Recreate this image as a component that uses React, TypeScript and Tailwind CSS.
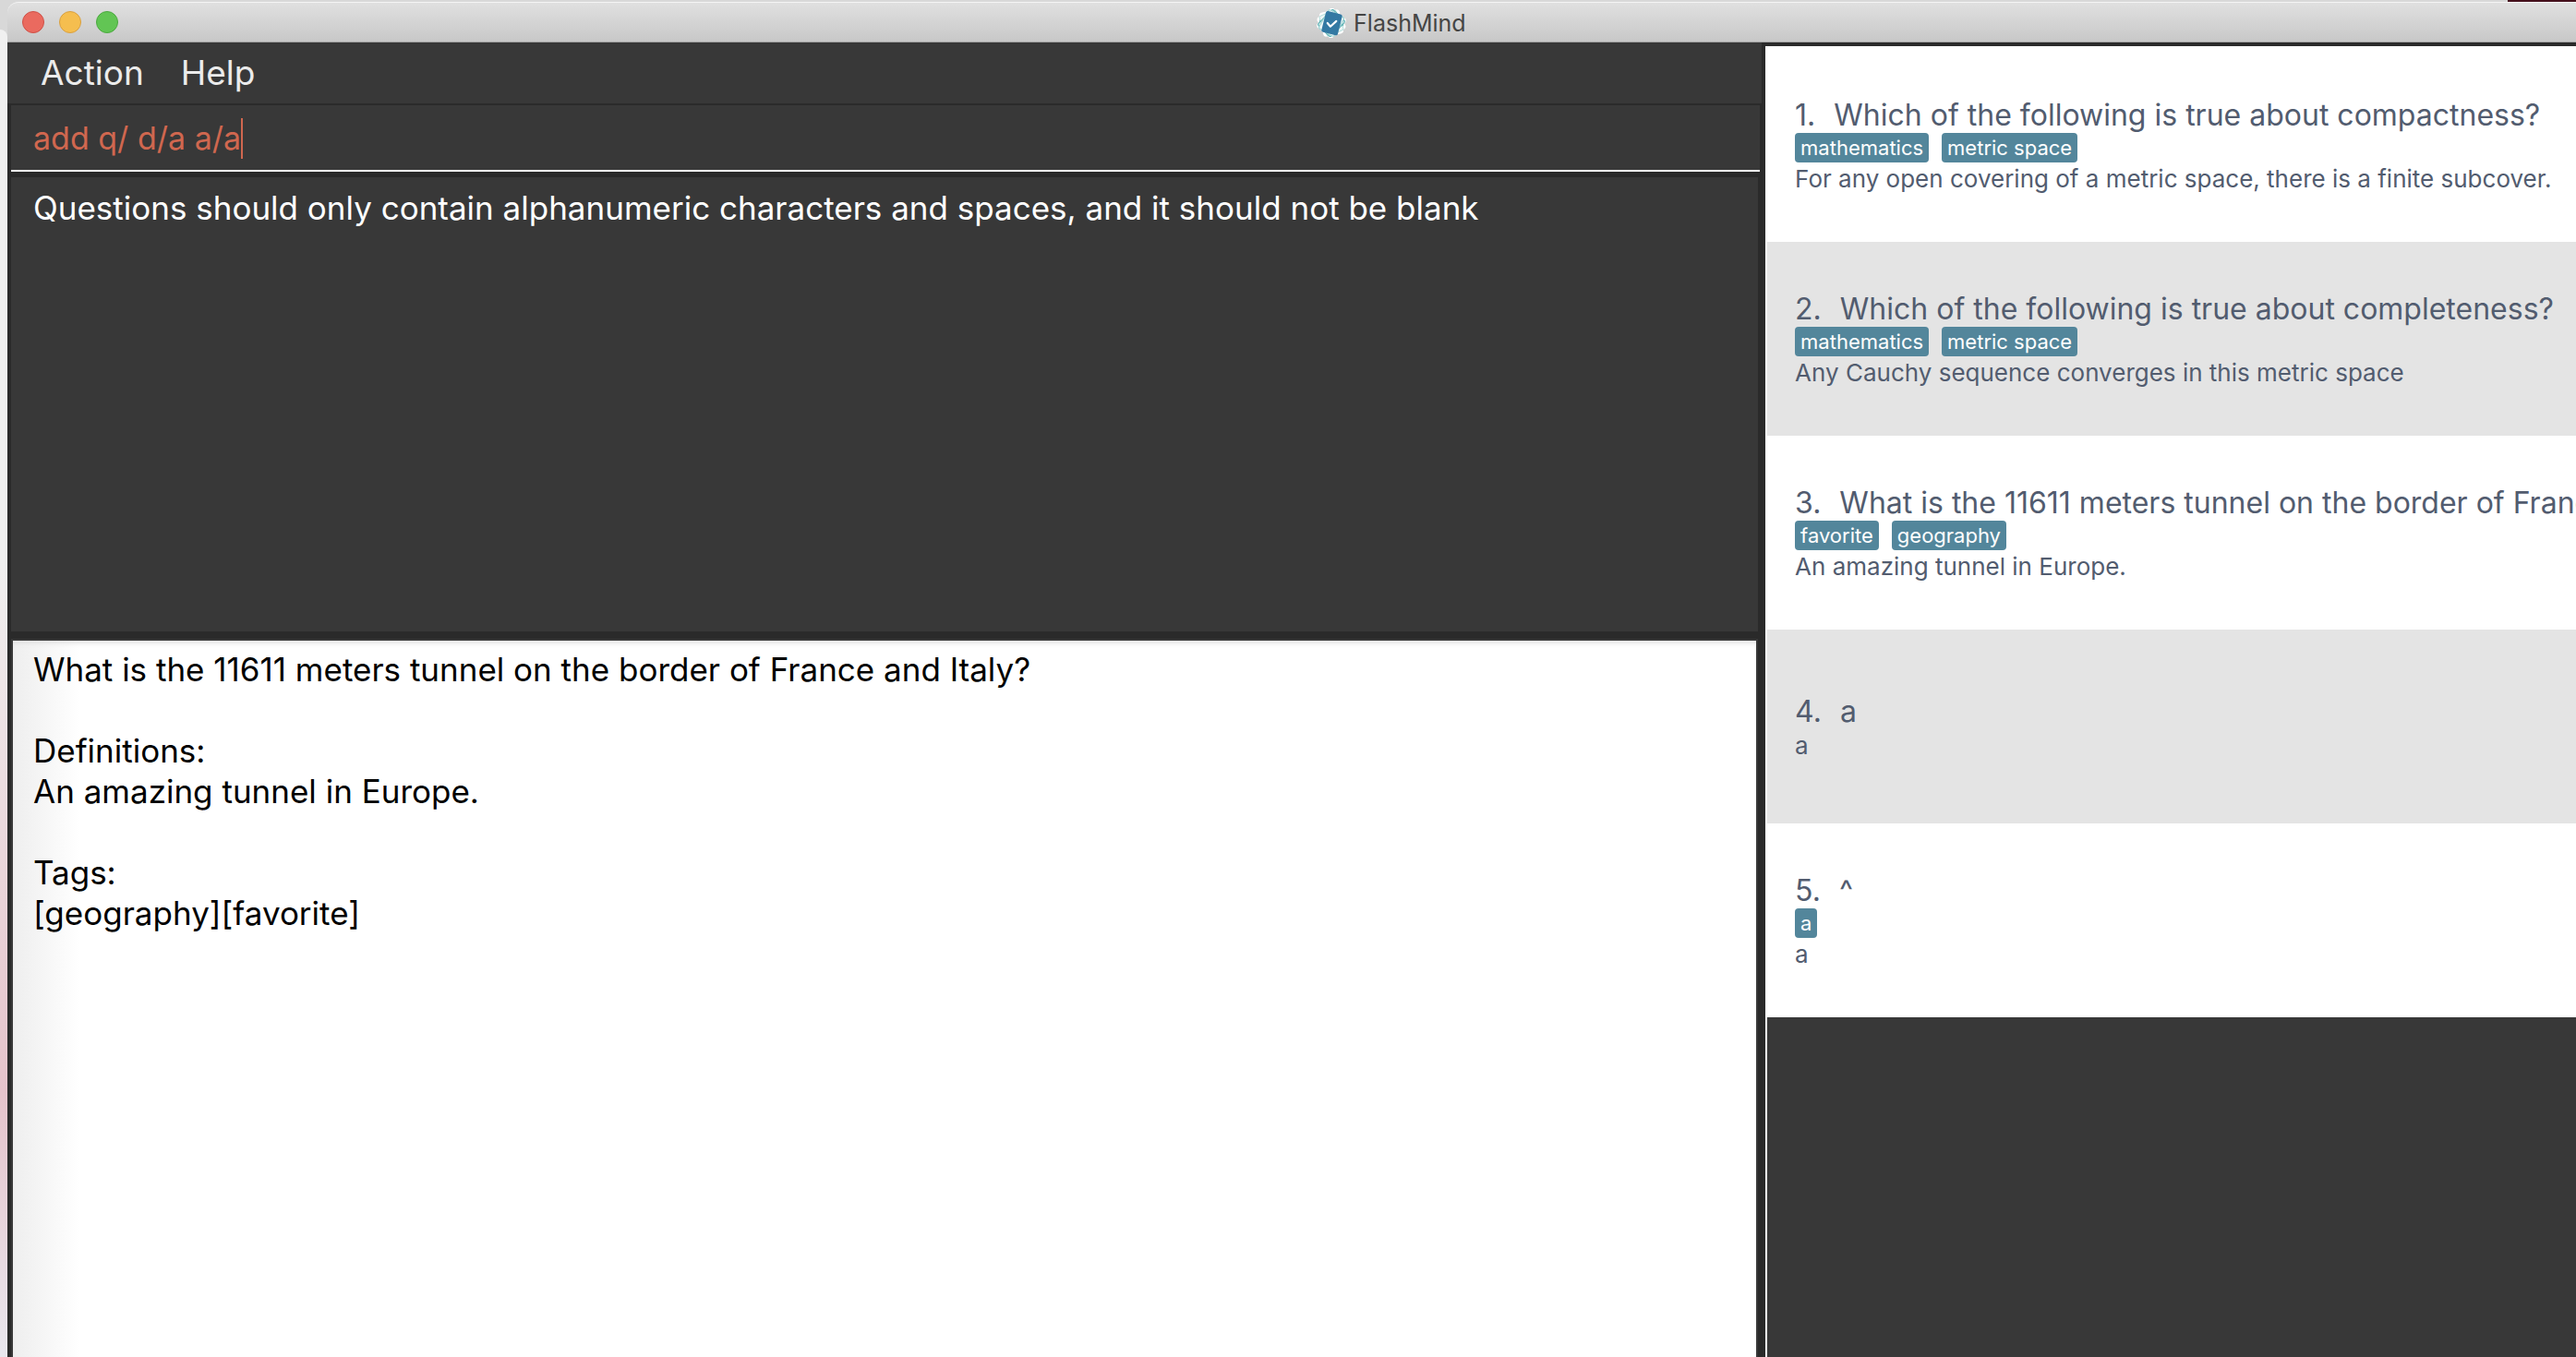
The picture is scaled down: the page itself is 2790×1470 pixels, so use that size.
import { useState } from "react";

type Card = { question: string; tags: string[]; definition: string };

const cards: Card[] = [
  {
    question: "Which of the following is true about compactness?",
    tags: ["mathematics", "metric space"],
    definition: "For any open covering of a metric space, there is a finite subcover.",
  },
  {
    question: "Which of the following is true about completeness?",
    tags: ["mathematics", "metric space"],
    definition: "Any Cauchy sequence converges in this metric space",
  },
  {
    question: "What is the 11611 meters tunnel on the border of France and Italy?",
    tags: ["favorite", "geography"],
    definition: "An amazing tunnel in Europe.",
  },
  { question: "a", tags: [], definition: "a" },
  { question: "^", tags: ["a"], definition: "a" },
];

const detail = [
  "What is the 11611 meters tunnel on the border of France and Italy?",
  "",
  "Definitions:",
  "An amazing tunnel in Europe.",
  "",
  "Tags:",
  "[geography][favorite]",
].join("\n");

function AppIcon() {
  return (
    <svg viewBox="0 0 30 30" className="size-8" aria-hidden="true">
      <g fill="#fff" stroke="#fff" strokeWidth="3" strokeLinejoin="round">
        <rect x="6" y="4" width="18" height="22" rx="2" transform="rotate(-35 15 15)" />
        <rect x="6" y="4" width="18" height="22" rx="2" transform="rotate(-12 15 15)" />
        <rect x="6" y="4" width="18" height="22" rx="2" transform="rotate(40 15 15)" />
      </g>
      <g fill="#eef7f7" strokeWidth="1">
        <rect x="7" y="5" width="16" height="20" rx="2" stroke="#6dbdb9" transform="rotate(-42 15 15)" />
        <rect x="6" y="4" width="18" height="22" rx="2" stroke="#b9e0de" transform="rotate(-24 15 15)" />
        <rect x="6" y="4" width="18" height="22" rx="2" stroke="#4fa9ad" transform="rotate(44 15 15)" />
        <rect x="6" y="4" width="18" height="22" rx="2" stroke="#9ad2d1" transform="rotate(30 15 15)" />
      </g>
      <rect x="7" y="4" width="17" height="22" rx="2" fill="#3379a3" transform="rotate(14 15 15)" />
      <path d="M11 15l3 3.500 6-5.500" fill="none" stroke="#fff" strokeWidth="2" strokeLinecap="round" strokeLinejoin="round" />
    </svg>
  );
}

function TitleBar() {
  return (
    <header className="flex h-11 shrink-0 items-center rounded-tl-xl border-t border-b border-t-[#f4f4f4] border-b-[#a3a3a3] bg-linear-to-b from-[#e0e0e0] to-[#c8c8c8] px-4">
      <div className="flex flex-[13] gap-4">
        <button aria-label="Close" className="size-6 rounded-full border border-[#cf5148] bg-[#ea6a5f]" />
        <button aria-label="Minimize" className="size-6 rounded-full border border-[#d9a040] bg-[#f5be4f]" />
        <button aria-label="Zoom" className="size-6 rounded-full border border-[#4ba93f] bg-[#62c554]" />
      </div>
      <h1 className="flex items-center gap-2 pt-[2px] text-[25px] leading-8 text-[#454545]">
        <AppIcon />
        FlashMind
      </h1>
      <div className="flex-[11]" />
    </header>
  );
}

function CardRow({ card, index }: { card: Card; index: number }) {
  return (
    <li className="flex h-[210px] flex-col justify-center overflow-hidden pt-[2px] pl-[30px] whitespace-nowrap text-[#525c6f] odd:bg-white even:bg-[#e4e4e4]">
      <h2 className="flex gap-5 text-[32px] leading-[38px]">
        <span>{index + 1}.</span>
        <span>{card.question}</span>
      </h2>
      {card.tags.length > 0 && (
        <ul className="flex gap-[14px]">
          {card.tags.map((tag) => (
            <li key={tag} className="rounded bg-[#53869b] px-[6px] text-[22px] leading-8 text-white">
              {tag}
            </li>
          ))}
        </ul>
      )}
      <p className="pt-[2px] text-[26px] leading-8">{card.definition}</p>
    </li>
  );
}

export default function App() {
  const [command, setCommand] = useState("add q/ d/a a/a");

  return (
    <div className="flex h-screen flex-col overflow-hidden bg-[#d8d8d8] font-['Inter',sans-serif]">
      <div className="flex h-[2px] shrink-0 justify-end">
        <div className="w-[74px] bg-[#45101c]" />
      </div>
      <div className="flex min-h-0 flex-1">
        <div className="mt-[30px] w-2 shrink-0 rounded-tr-lg bg-linear-to-b from-[#f0f0f0] from-40% via-[#e5c3cb] via-80% to-[#e9e7ee]" />
        <div className="flex min-w-0 flex-1 flex-col">
          <TitleBar />
          <div className="flex min-h-0 flex-1 bg-[#2a2a2a]">
            <div className="flex w-[68.3%] shrink-0 flex-col">
              <nav className="flex h-[66px] items-center gap-10 bg-[#383838] pl-9 text-[37px] leading-[44px] text-[#ebebeb]">
                <button>Action</button>
                <button>Help</button>
              </nav>
              <main className="flex min-h-0 flex-1 flex-col px-1 pt-[2px]">
                <label className="mr-[-2px] flex h-[72px] items-center border-b-2 border-white bg-[#383838] pt-[2px] pl-6">
                  <input
                    aria-label="Command"
                    value={command}
                    onChange={(e) => setCommand(e.target.value)}
                    className="field-sizing-content text-[34px] leading-[44px] text-[#d0674f] caret-transparent outline-none"
                  />
                  <span className="h-11 w-[2px] bg-[#d0674f]" />
                </label>
                <textarea
                  aria-label="Result"
                  readOnly
                  className="mt-[6px] h-[492px] shrink-0 resize-none bg-[#383838] px-6 py-[11px] text-[35px] leading-[44px] text-white outline-none"
                  value="Questions should only contain alphanumeric characters and spaces, and it should not be blank"
                />
                <div className="mt-2 flex min-h-0 flex-1 border-2 border-b-0 border-[#383838]">
                  <textarea
                    aria-label="Flashcard"
                    readOnly
                    className="flex-1 resize-none bg-white bg-linear-to-r from-[#eeeeee] to-white to-[72px] px-[22px] py-[9px] text-[35px] leading-[44px] text-black shadow-[inset_0_8px_6px_-6px_#dddddd] outline-none"
                    value={detail}
                  />
                </div>
              </main>
            </div>
            <aside className="mt-1 ml-1 min-w-0 flex-1 border-t-2 border-l-2 border-white bg-[#383838]">
              <ol>
                {cards.map((card, i) => (
                  <CardRow key={card.question} card={card} index={i} />
                ))}
              </ol>
            </aside>
          </div>
        </div>
      </div>
    </div>
  );
}
